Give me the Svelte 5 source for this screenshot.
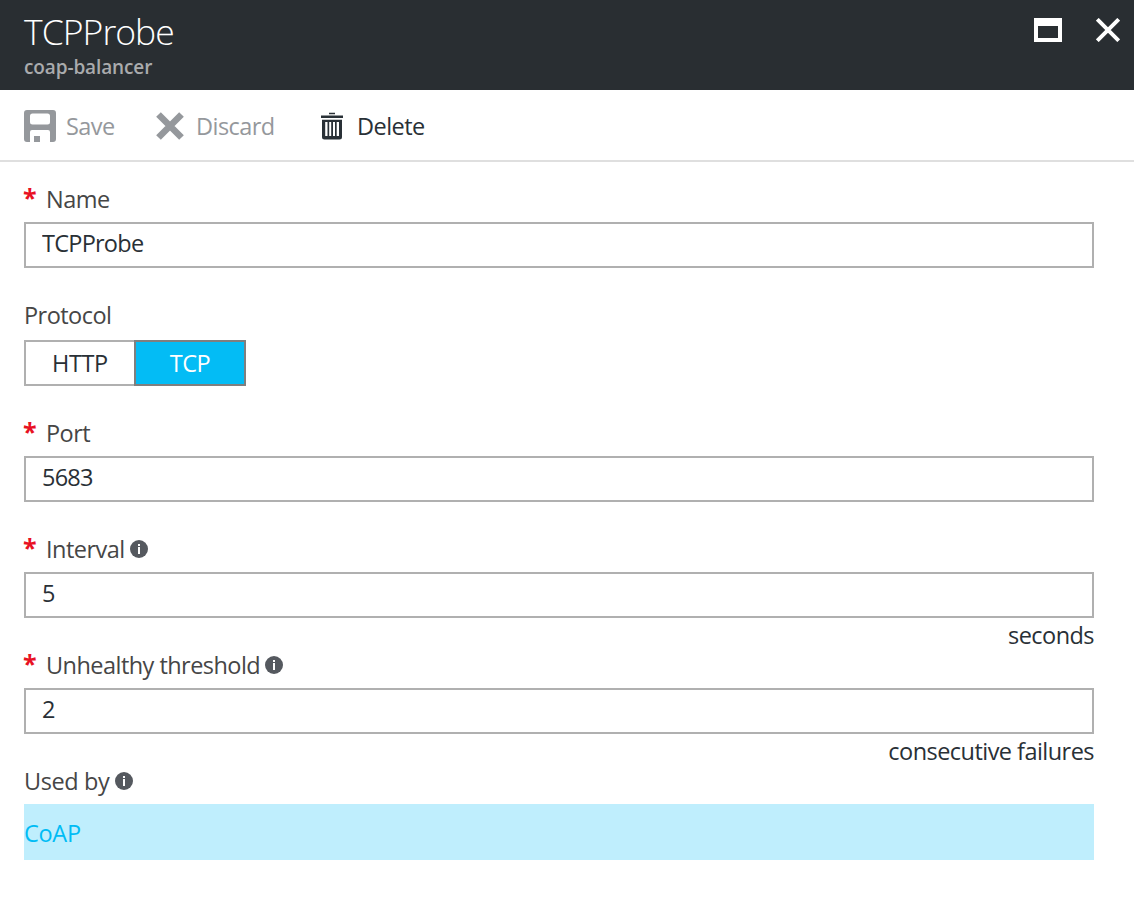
<script lang="ts">
  let name = $state('TCPProbe');
  let port = $state('5683');
  let interval = $state('5');
  let threshold = $state('2');
  let protocol = $state('TCP');
</script>

{#snippet info()}
  <svg class="info" width="18" height="18" viewBox="0 0 18 18" aria-hidden="true">
    <circle cx="9" cy="9" r="9" fill="#55595f" />
    <path d="M8 4h2v2H8zM8 7h2v7H8z" fill="#fff" />
  </svg>
{/snippet}

<main class="blade">
  <header>
    <div>
      <h1>TCPProbe</h1>
      <p>coap-balancer</p>
    </div>
    <div class="window">
      <svg width="28" height="24" viewBox="0 0 28 24"><path fill="#fff" fill-rule="evenodd" d="M0 0h28v24H0zM4 8v12h20V8z" /></svg>
      <svg width="24" height="24" viewBox="0 0 24 24"><path d="M1.300 1.300l21.400 21.400M22.700 1.300L1.300 22.700" stroke="#fff" stroke-width="3.900" /></svg>
    </div>
  </header>

  <nav>
    <button class="save" disabled>
      <svg width="32" height="32" viewBox="0 0 32 32"><path fill="#95989c" fill-rule="evenodd" d="M3 0h26a3 3 0 0 1 3 3v26a3 3 0 0 1-3 3h-3V22a2 2 0 0 0-2-2H8a2 2 0 0 0-2 2v10H3a3 3 0 0 1-3-3V3a3 3 0 0 1 3-3zM8.500 3.500A2.500 2.500 0 0 0 6 6v6a2.500 2.500 0 0 0 2.500 2.500h15A2.500 2.500 0 0 0 26 12V6a2.500 2.500 0 0 0-2.500-2.500zM10 26h6v6h-6z" /></svg>
      <span>Save</span>
    </button>
    <button class="discard" disabled>
      <svg width="28" height="28" viewBox="0 0 28 28"><path d="M2.500 2.500l23 23M25.500 2.500l-23 23" stroke="#95989c" stroke-width="6.600" /></svg>
      <span>Discard</span>
    </button>
    <button class="delete">
      <svg width="22" height="28" viewBox="0 0 22 28">
        <path fill="#293036" fill-rule="evenodd" d="M8 0.700h6v1.500H8zM0 3.500h22v2.600H0zM1 7.700h20V25a2.500 2.500 0 0 1-2.500 2.500h-15A2.500 2.500 0 0 1 1 25zM4.200 10v14h2.300V10zM8.200 10v14h2V10zM12 10v14h2V10zM15.700 10v14H18V10z" />
      </svg>
      <span>Delete</span>
    </button>
  </nav>

  <form>
    <label for="name"><b>*</b><span>Name</span></label>
    <input id="name" bind:value={name} />
    <div class="hint"></div>

    <div class="label plain"><span>Protocol</span></div>
    <div class="switch">
      <button type="button" class:on={protocol === 'HTTP'} onclick={() => (protocol = 'HTTP')}>HTTP</button>
      <button type="button" class:on={protocol === 'TCP'} onclick={() => (protocol = 'TCP')}>TCP</button>
    </div>
    <div class="hint"></div>

    <label for="port"><b>*</b><span>Port</span></label>
    <input id="port" bind:value={port} />
    <div class="hint"></div>

    <label for="interval"><b>*</b><span>Interval</span>{@render info()}</label>
    <input id="interval" bind:value={interval} />
    <div class="hint"><span>seconds</span></div>

    <label for="threshold"><b>*</b><span>Unhealthy threshold</span>{@render info()}</label>
    <input id="threshold" bind:value={threshold} />
    <div class="hint"><span>consecutive failures</span></div>

    <div class="label used"><span>Used by</span>{@render info()}</div>
    <a class="rule" href="#coap">CoAP</a>
  </form>
</main>

<style>
  :global(body) { background: #fff; }
  .blade, .blade * { box-sizing: border-box; }
  .blade {
    height: 898px;
    overflow: hidden;
    font: 400 23.5px 'Open Sans', sans-serif;
    letter-spacing: -0.54px;
    color: #293036;
  }
  button, input { font: inherit; letter-spacing: inherit; color: inherit; background: none; border: 0; margin: 0; border-radius: 0; outline: 0; }
  svg { display: block; flex: none; }

  header { display: flex; justify-content: space-between; height: 90px; padding: 0 14px 0 24px; background: #292e32; color: #fff; }
  h1 { margin: 0; padding-top: 8px; font-size: 35.5px; font-weight: 300; line-height: 46px; letter-spacing: -0.95px; }
  header p { margin: 0; font-size: 19px; font-weight: 600; line-height: 27px; letter-spacing: -0.12px; color: #a9abad; }
  .window { display: flex; gap: 34px; padding-top: 18px; }

  nav { display: flex; height: 72px; padding-left: 24px; border-bottom: 2px solid #dfdfdf; }
  nav button { display: flex; align-items: center; height: 72px; padding: 0; line-height: 72px; white-space: nowrap; }
  nav button:disabled { color: #95989c; }
  .save { width: 132px; gap: 10px; }
  .discard { width: 165px; gap: 12px; }
  .delete { gap: 14px; }

  form { padding: 26px 40px 0 24px; }
  label, .label { display: flex; height: 34px; line-height: 22px; color: #464646; white-space: nowrap; }
  .label.plain { height: 36px; }
  label b { width: 22px; margin-top: -1px; font-size: 25px; font-weight: 700; line-height: 20px; text-indent: -1px; color: #e81123; }
  .info { margin: 2px 0 0 5px; }
  .used { letter-spacing: -0.4px; }
  .used .info { margin-left: 6px; }
  input { display: block; width: 100%; height: 46px; padding: 0 16px 4px; border: 2px solid #b0b0b0; letter-spacing: -0.75px; }
  .hint { height: 36px; line-height: 34px; text-align: right; }
  .switch { display: flex; }
  .switch button { width: 112px; height: 46px; padding: 0; border: 2px solid #b0b0b0; line-height: 43px; letter-spacing: -0.4px; text-align: center; }
  .switch button + button { margin-left: -2px; }
  .switch .on { background: #03bcf5; border-color: #7f7f7f; color: #fff; }
  .rule { display: block; height: 56px; line-height: 58px; letter-spacing: -0.3px; background: #bfeefd; color: #00bcf5; text-decoration: none; }
</style>
